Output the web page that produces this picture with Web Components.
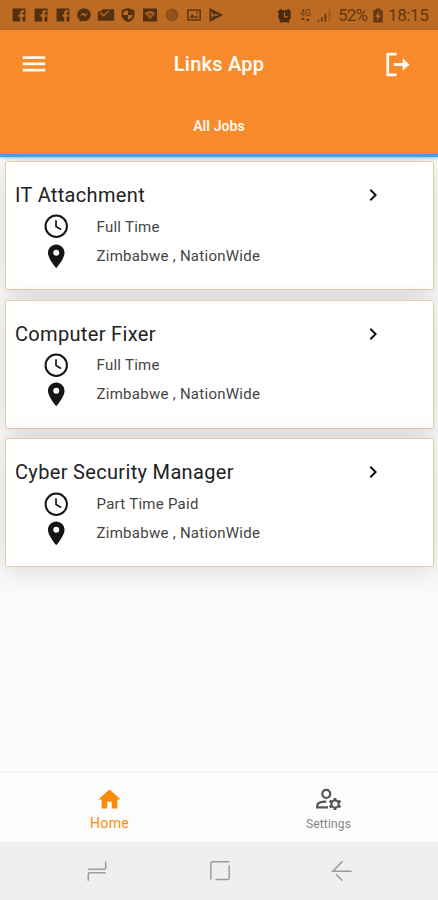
<!DOCTYPE html>
<html lang="en">
<head>
<meta charset="utf-8">
<meta name="viewport" content="width=device-width">
<title>Links App</title>
<style>
    html, body { height:100%; margin:0; }
    body { background:#fafafa; font-family:Roboto, "Liberation Sans", sans-serif; color:#222; }
</style>
</head>
<body>
<app-screen>
    <status-bar slot="top" time="18:15" battery="52%"></status-bar>
    <app-header slot="top" heading="Links App">All Jobs</app-header>
    <job-card type="Full Time" place="Zimbabwe , NationWide">IT Attachment</job-card>
    <job-card type="Full Time" place="Zimbabwe , NationWide">Computer Fixer</job-card>
    <job-card type="Part Time Paid" place="Zimbabwe , NationWide">Cyber Security Manager</job-card>
    <tab-bar slot="bottom">
        <tab-item icon="home" active>Home</tab-item>
        <tab-item icon="settings">Settings</tab-item>
    </tab-bar>
    <system-nav slot="bottom"></system-nav>
</app-screen>

<script>
// all paths are drawn on a 24x24 canvas
const icons = {
    facebook: '<path fill-rule="evenodd" d="M1 1h22v22h-5v-8h3.500v-4H18V8.500q0-1.500 3-1.500V3.500c-5 0-7 1-7 5V11h-3v4h3v8H1z"/>',
    messenger: '<path fill-rule="evenodd" d="M12 1C5 1 .5 5.500.5 11.500c0 4 1.500 6.500 4 8.500v4l4-2c8 2 15-2.500 15-10.500C23.500 5.500 19 1 12 1zM3.500 15l7-7.500 3.500 3.500 6-3.500-6.500 7.500-3.500-3.500z"/>',
    outlook: '<path fill-rule="evenodd" d="M6 2h20v20H-2V6h5zM2 9l6 6L18 5l-2-1-8 8-4-5z"/>',
    shield: '<path d="M12 0 1 4v7c0 6 4 11 11 13 7-2 11-7 11-13V4z"/><path d="M12 4v8H4V6zM12 12h8c-1 4-4 7-8 8z" fill="#bd6a22"/>',
    wifi: '<path fill-rule="evenodd" d="M0 1h24v22H0zM3 9l9 10 9-10q-9-7-18 0z"/><path d="m6 10 6 7 6-7q-6-4-12 0z" opacity=".55"/>',
    ball: '<g opacity=".48"><circle cx="12" cy="12" r="11"/><path d="m5 7 12 12M7 4l12 12M3 11l10 10" stroke="#bd6a22"/></g>',
    image: '<path fill-rule="evenodd" opacity=".8" d="M0 2h24v20H0zM3 5v14h18V5zM4 17l5-7 4 5 3-3 4 5zM16 7h3v3h-3z"/>',
    play: '<path fill-rule="evenodd" d="M1 0v24l23-12zM4 6l5 6-5 6zM11 10l6 2-6 2-2-2z"/>',
    alarm: '<circle cx="12" cy="13" r="10"/><path d="m1 6 5-5 3 3-6 5zM23 6l-5-5-3 3 6 5zM4 22l3-4 3 3-4 3zM20 22l-3-4-3 3 4 3z"/><path d="M12 7v7h5" fill="none" stroke="#bd6a22" stroke-width="2"/>',
    signal: '<path d="M0 20h3v3H0zM6 16h3v7H6zM12 10h3v13h-3z"/><path d="M19 2h3v21h-3z" opacity=".35"/>',
    charge: '<path fill-rule="evenodd" d="M8 0h8v3h4v21H4V3h4zM14 5l-7 9h4l-1 7 7-9h-4z"/>',
    menu: '<path d="M3 5.700h18v2.300H3zM3 10.700h18V13H3zM3 15.700h18V18H3z"/>',
    logout: '<path d="M12 2.700H4.200v18.600H12M9.500 12H20" fill="none" stroke="currentColor" stroke-width="2.500" stroke-linejoin="round"/><path d="m17.500 6.500 6 5.500-6 5.500z"/>',
    clock: '<circle cx="12" cy="12" r="9" fill="none" stroke="currentColor" stroke-width="1.700"/><path d="M11.800 7v5.200l4.300 2.600" fill="none" stroke="currentColor" stroke-width="1.400"/>',
    pin: '<path d="M12 2C8.130 2 5 5.130 5 9c0 5.250 7 13 7 13s7-7.750 7-13c0-3.870-3.130-7-7-7zm0 9.500a2.500 2.500 0 0 1 0-5 2.500 2.500 0 0 1 0 5z"/>',
    chevron: '<path d="M8.600 16.600 13.200 12 8.600 7.400 10 6l6 6-6 6z"/>',
    home: '<path d="M10 20v-6h4v6h5v-8h3L12 3 2 12h3v8z"/>',
    settings: '<g fill="none" stroke="currentColor" stroke-width="2"><circle cx="10" cy="7" r="3.500"/><path d="M11.500 19H2v-1.500c0-2.500 3.500-3.800 8-3.700"/><circle cx="17.800" cy="16" r="3.200" stroke-width="1.800"/></g><path d="M16.700 10.700h2.200l.4 2.500h-3zM16.700 21.300h2.200l.4-2.500h-3zM12.400 14.300l1.100-2 2.500 1-1.500 2.500zM23.200 14.300l-1.100-2-2.500 1 1.500 2.500zM12.400 17.700l1.100 2 2.500-1-1.500-2.500zM23.200 17.700l-1.100 2-2.500-1 1.500-2.500z"/>',
    recents: '<path d="M2.500 10h17.500q1.500 0 1.500-1.500V1.500M21.500 14H4q-1.500 0-1.500 1.500v7" fill="none" stroke="currentColor" stroke-width="1.700"/>',
    square: '<path d="M2 21.300V3.500q0-1.500 1.500-1.500H22M22 6v13.800q0 1.500-1.500 1.500H7" fill="none" stroke="currentColor" stroke-width="1.600"/>',
    back: '<path d="M12.500 1.500 2 12.200h20.500M5.500 15.500l7 7" fill="none" stroke="currentColor" stroke-width="1.600"/>',
};

class BaseElement extends HTMLElement {
    connectedCallback() {
        if (this.shadowRoot) return;
        this.attachShadow({mode:'open'}).innerHTML = this.render();
    }
    attr(name) { return this.getAttribute(name) || ''; }
}

customElements.define('app-icon', class extends BaseElement {
    render() {
        return `
        <style>
        :host { display:block; flex:none; width:24px; height:24px; }
        svg { display:block; width:100%; height:100%; overflow:visible; fill:currentColor; }
        </style>
        <svg viewBox="0 0 24 24" aria-hidden="true">${icons[this.attr('name')]}</svg>`;
    }
});

customElements.define('app-screen', class extends BaseElement {
    render() {
        return `
        <style>
        :host { display:flex; flex-direction:column; height:900px; width:438px; overflow:hidden; }
        .jobs { flex:1; display:flex; flex-direction:column; gap:9.700px; padding:4px 4px 0 5px; }
        header { position:relative; z-index:1; }
        </style>
        <header><slot name=top></slot></header>
        <main class=jobs><slot></slot></main>
        <footer><slot name=bottom></slot></footer>`;
    }
});

customElements.define('status-bar', class extends BaseElement {
    render() {
        const notes = ['facebook','facebook','facebook','messenger','outlook','shield','wifi','ball','image','play'];
        return `
        <style>
        :host { display:flex; align-items:center; height:30px; padding:0 9px 0 8px; box-sizing:border-box;
            background:#bd6a22; color:#55300f; font-size:17px; }
        .notes { display:flex; flex:1; }
        .notes span { width:21.850px; display:flex; justify-content:center; }
        .notes app-icon { width:14px; height:14px; }
        .state { display:flex; align-items:center; color:#633811; }
        .alarm { width:15px; height:15px; color:#4b2a0d; margin-right:7px; }
        .net { display:flex; flex-direction:column; align-items:center; width:13px; font-size:9px; line-height:8px; margin-right:5px; }
        .net svg { width:9px; height:5px; fill:currentColor; }
        .signal { width:15px; height:14px; margin-right:6px; }
        .percent { width:30px; letter-spacing:-.8px; margin-right:3px; }
        .charge { width:14px; height:15px; margin-right:3px; }
        .time { width:41px; letter-spacing:-.4px; white-space:nowrap; }
        </style>
        <div class=notes>${notes.map(name => `<span><app-icon name=${name}></app-icon></span>`).join('')}</div>
        <div class=state>
            <app-icon class=alarm name=alarm></app-icon>
            <span class=net>4G<svg viewBox="0 0 9 5"><path d="M0 3 2 0l2 3zM5 2h4L7 5z"/></svg></span>
            <app-icon class=signal name=signal></app-icon>
            <span class=percent>${this.attr('battery')}</span>
            <app-icon class=charge name=charge></app-icon>
            <span class=time>${this.attr('time')}</span>
        </div>`;
    }
});

customElements.define('app-header', class extends BaseElement {
    render() {
        return `
        <style>
        :host { display:block; box-sizing:border-box; height:127px; background:#f78b2b; color:#fff8ee;
            border-bottom:3px solid #5f98cf; box-shadow:inset 0 -1px #f28a17, 0 1px 3px rgba(0,0,0,.25); }
        .bar { display:grid; grid-template-columns:69px 1fr 69px; align-items:center; height:68px; }
        .menu { width:30px; height:30px; margin-left:19px; }
        .logout { width:27px; height:27px; margin-left:14px; }
        h1 { margin:0; font-size:20px; font-weight:600; text-align:center; letter-spacing:.2px; }
        .tab { height:55px; display:flex; align-items:center; justify-content:center; font-size:14px; font-weight:600; letter-spacing:.1px; }
        </style>
        <div class=bar>
            <app-icon class=menu name=menu></app-icon>
            <h1>${this.attr('heading')}</h1>
            <app-icon class=logout name=logout></app-icon>
        </div>
        <div class=tab><slot></slot></div>`;
    }
});

customElements.define('job-card', class extends BaseElement {
    render() {
        return `
        <style>
        :host { display:block; box-sizing:border-box; height:129px; padding:20.500px 9px 0; background:#fff;
            border:1px solid #e6cda6; border-radius:2px; box-shadow:0 3px 28px rgba(0,0,0,.14); }
        .head { display:flex; justify-content:space-between; align-items:center; height:25px; padding-right:39.500px; }
        h2 { margin:0; font-size:20px; font-weight:400; letter-spacing:.33px; color:#222; }
        .row { display:flex; align-items:center; height:29.200px; padding-left:26.500px; font-size:15px; letter-spacing:.27px; color:#444; }
        .row app-icon { width:28.500px; height:28.500px; margin-right:26.500px; color:#151515; }
        .head app-icon { color:#111; }
        .rows { margin-top:4.500px; }
        </style>
        <div class=head><h2><slot></slot></h2><app-icon name=chevron></app-icon></div>
        <div class=rows>
            <div class=row><app-icon name=clock></app-icon><span>${this.attr('type')}</span></div>
            <div class=row><app-icon name=pin></app-icon><span>${this.attr('place')}</span></div>
        </div>`;
    }
});

customElements.define('tab-bar', class extends BaseElement {
    render() {
        return `
        <style>
        :host { display:grid; grid-template-columns:1fr 1fr; box-sizing:border-box; height:70px;
            background:#fcfcfc; border-top:1px solid #eee; }
        </style>
        <slot></slot>`;
    }
});

customElements.define('tab-item', class extends BaseElement {
    render() {
        return `
        <style>
        :host { display:flex; flex-direction:column; align-items:center; padding-top:13px; color:#858585; font-size:12px; letter-spacing:.15px; }
        :host([active]) { color:#fb8c0a; font-size:14px; letter-spacing:.3px; }
        app-icon { width:27px; height:27px; color:#555; }
        :host([active]) app-icon { color:#fb8c0a; }
        span { line-height:18px; margin-top:2px; }
        :host([active]) span { margin-top:1px; }
        </style>
        <app-icon name=${this.attr('icon')}></app-icon>
        <span><slot></slot></span>`;
    }
});

customElements.define('system-nav', class extends BaseElement {
    render() {
        return `
        <style>
        :host { display:flex; justify-content:center; align-items:center; gap:100.500px; height:58px; padding-left:1px; background:#efefef; color:#9b9b9b; }
        app-icon { width:22px; height:22px; }
        </style>
        <app-icon name=recents></app-icon>
        <app-icon name=square></app-icon>
        <app-icon name=back></app-icon>`;
    }
});
</script>
</body>
</html>
